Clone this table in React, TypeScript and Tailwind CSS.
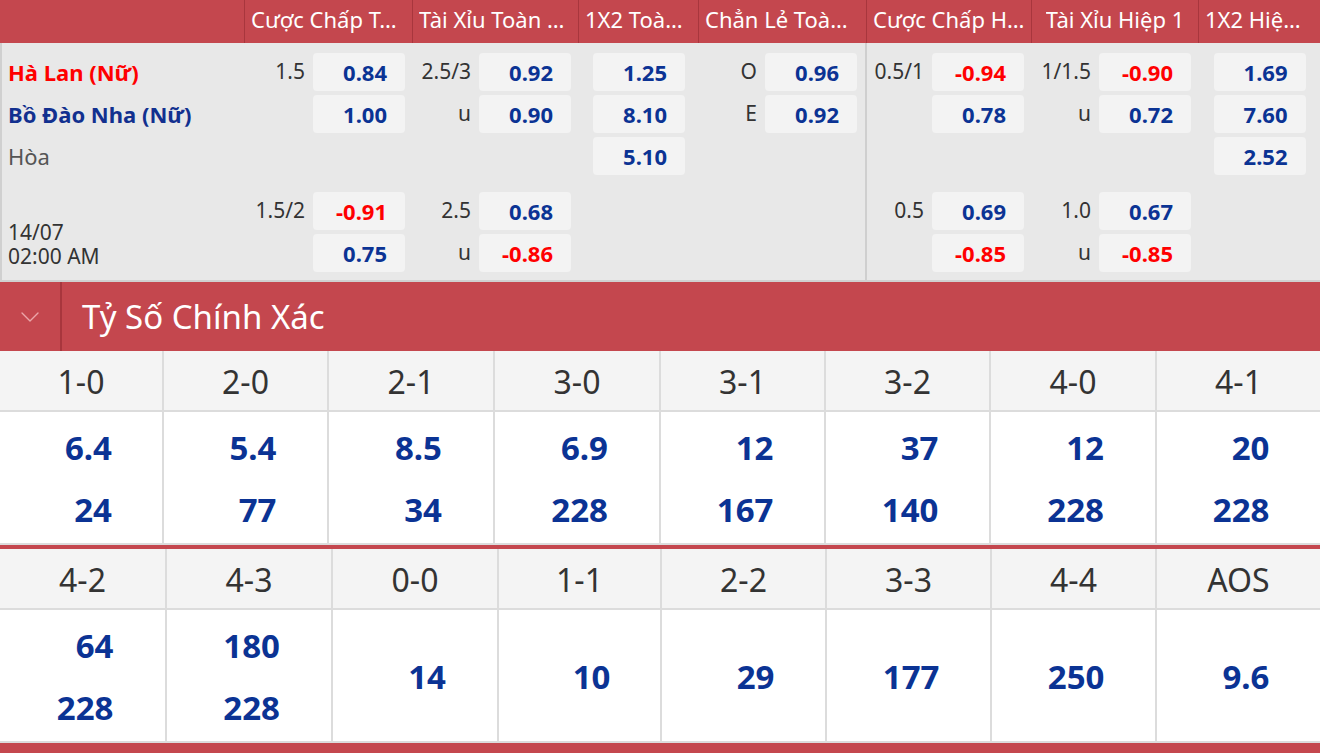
import React from 'react';
import { ChevronDown } from 'lucide-react';

type Odd = { l?: string; v: string } | null;

type OddsCol = {
  label: string;
  w: string;
  center?: boolean;
  divider?: boolean;
  rows: Odd[];
};

const oddsCols: OddsCol[] = [
  {
    label: 'Cược Chấp Toàn Trận',
    w: 'w-[168px]',
    rows: [{ l: '1.5', v: '0.84' }, { v: '1.00' }, null, { l: '1.5/2', v: '-0.91' }, { v: '0.75' }],
  },
  {
    label: 'Tài Xỉu Toàn Trận',
    w: 'w-[166px]',
    rows: [{ l: '2.5/3', v: '0.92' }, { l: 'u', v: '0.90' }, null, { l: '2.5', v: '0.68' }, { l: 'u', v: '-0.86' }],
  },
  {
    label: '1X2 Toàn Trận',
    w: 'w-[120px]',
    center: true,
    rows: [{ v: '1.25' }, { v: '8.10' }, { v: '5.10' }, null, null],
  },
  {
    label: 'Chẳn Lẻ Toàn Trận',
    w: 'w-[168px]',
    divider: true,
    rows: [{ l: 'O', v: '0.96' }, { l: 'E', v: '0.92' }, null, null, null],
  },
  {
    label: 'Cược Chấp Hiệp 1',
    w: 'w-[165px]',
    rows: [{ l: '0.5/1', v: '-0.94' }, { v: '0.78' }, null, { l: '0.5', v: '0.69' }, { v: '-0.85' }],
  },
  {
    label: 'Tài Xỉu Hiệp 1',
    w: 'w-[167px]',
    rows: [{ l: '1/1.5', v: '-0.90' }, { l: 'u', v: '0.72' }, null, { l: '1.0', v: '0.67' }, { l: 'u', v: '-0.85' }],
  },
  {
    label: '1X2 Hiệp 1',
    w: 'w-[121px]',
    center: true,
    rows: [{ v: '1.69' }, { v: '7.60' }, { v: '2.52' }, null, null],
  },
];

type Score = { s: string; w: string; v: string[] };

const scoresTop: Score[] = [
  { s: '1-0', w: 'w-[162px]', v: ['6.4', '24'] },
  { s: '2-0', w: 'w-[165px]', v: ['5.4', '77'] },
  { s: '2-1', w: 'w-[166px]', v: ['8.5', '34'] },
  { s: '3-0', w: 'w-[166px]', v: ['6.9', '228'] },
  { s: '3-1', w: 'w-[165px]', v: ['12', '167'] },
  { s: '3-2', w: 'w-[165px]', v: ['37', '140'] },
  { s: '4-0', w: 'w-[166px]', v: ['12', '228'] },
  { s: '4-1', w: 'w-[165px]', v: ['20', '228'] },
];

const scoresBottom: Score[] = [
  { s: '4-2', w: 'w-[165px]', v: ['64', '228'] },
  { s: '4-3', w: 'w-[166px]', v: ['180', '228'] },
  { s: '0-0', w: 'w-[166px]', v: ['14'] },
  { s: '1-1', w: 'w-[163px]', v: ['10'] },
  { s: '2-2', w: 'w-[165px]', v: ['29'] },
  { s: '3-3', w: 'w-[165px]', v: ['177'] },
  { s: '4-4', w: 'w-[165px]', v: ['250'] },
  { s: 'AOS', w: 'w-[165px]', v: ['9.6'] },
];

const OddCell = ({ odd, center }: { odd: Odd; center?: boolean }) => {
  if (!odd) return <div className="h-[38px]" />;
  const neg = odd.v.startsWith('-');
  return (
    <div className={`flex h-[38px] items-center gap-2 ${center ? 'justify-center' : 'justify-end'}`}>
      {!center && <span className="text-[21px] text-[#333]">{odd.l}</span>}
      <div
        className={`flex h-[38px] w-[92px] items-center justify-end rounded bg-[#f3f3f3] pr-[18px] text-[22px] font-bold ${
          neg ? 'text-[#ff0000]' : 'text-[#0b3394]'
        }`}
      >
        {odd.v}
      </div>
    </div>
  );
};

const ScoreGrid = ({ items }: { items: Score[] }) => (
  <div>
    <div className="flex h-[61px] border-b-2 border-[#dcdcdc] bg-[#f4f4f4]">
      {items.map((c, i) => (
        <div
          key={c.s}
          className={`${c.w} flex items-center justify-center pt-[3px] text-[32px] text-[#333] ${
            i > 0 ? 'border-l-2 border-[#dcdcdc]' : ''
          }`}
        >
          {c.s}
        </div>
      ))}
    </div>
    <div className="flex h-[133px] border-b-2 border-[#dcdcdc] bg-white">
      {items.map((c, i) => (
        <div
          key={c.s}
          className={`${c.w} flex flex-col items-center justify-center pt-[3px] ${i > 0 ? 'border-l-2 border-[#dcdcdc]' : ''}`}
        >
          {c.v.map((v, j) => (
            <div key={j} className="w-[62px] text-right text-[33px] font-bold leading-[62px] text-[#0b3394]">
              {v}
            </div>
          ))}
        </div>
      ))}
    </div>
  </div>
);

export default function App() {
  return (
    <div className="w-[1320px] h-[753px] overflow-hidden bg-white font-['Segoe_UI','Noto_Sans',sans-serif]">
      {/* column headers */}
      <div className="flex h-[43px] bg-[#c4474e] text-white">
        <div className="w-[245px] border-r border-[#a8363d]" />
        {oddsCols.map((c, i) => (
          <div
            key={c.label}
            className={`${c.w} flex items-center justify-center px-1.5 pb-[5px] ${
              i < oddsCols.length - 1 ? 'border-r border-[#a8363d]' : ''
            }`}
          >
            <span className="truncate text-[22px] leading-[28px]">{c.label}</span>
          </div>
        ))}
      </div>

      {/* match odds */}
      <div className="flex h-[239px] border-b-2 border-l-2 border-[#d0d0d0] bg-[#e8e8e8]">
        <div className="flex w-[243px] flex-col pt-[10px] pl-[6px]">
          <div className="flex h-[38px] items-center text-[22px] font-bold text-[#ff0000]">Hà Lan (Nữ)</div>
          <div className="mt-1 flex h-[38px] items-center text-[22px] font-bold text-[#12308f]">Bồ Đào Nha (Nữ)</div>
          <div className="mt-1 flex h-[38px] items-center text-[22px] text-[#555]">Hòa</div>
          <div className="mt-auto pb-[12px] text-[21px] leading-[24px] text-[#333]">
            <div>14/07</div>
            <div>02:00 AM</div>
          </div>
        </div>
        {oddsCols.map((c) => (
          <div
            key={c.label}
            className={`${c.w} flex flex-col gap-1 pt-[10px] ${c.center ? 'px-[14px]' : 'pr-2'} ${
              c.divider ? 'border-r-2 border-[#cfcfcf]' : ''
            }`}
          >
            <OddCell odd={c.rows[0]} center={c.center} />
            <OddCell odd={c.rows[1]} center={c.center} />
            <OddCell odd={c.rows[2]} center={c.center} />
            <div className="h-[9px]" />
            <OddCell odd={c.rows[3]} center={c.center} />
            <OddCell odd={c.rows[4]} center={c.center} />
          </div>
        ))}
      </div>

      {/* correct score */}
      <div className="flex h-[69px] items-center bg-[#c4474e] text-white">
        <div className="flex h-full w-[62px] items-center justify-center border-r-2 border-[#a8363d]">
          <ChevronDown size={32} strokeWidth={1} className="text-[#eba6a9]" />
        </div>
        <span className="pl-[20px] text-[33px]">Tỷ Số Chính Xác</span>
      </div>

      <ScoreGrid items={scoresTop} />
      <div className="h-1 bg-[#c4474e]" />
      <ScoreGrid items={scoresBottom} />
      <div className="h-[10px] bg-[#c4474e]" />
    </div>
  );
}
